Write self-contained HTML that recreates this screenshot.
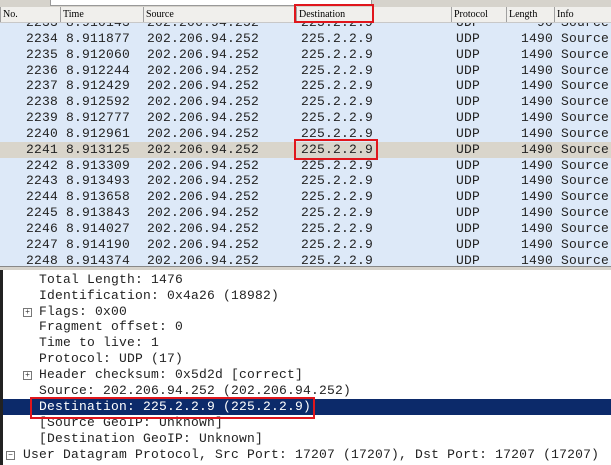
<!DOCTYPE html>
<html><head><meta charset="utf-8"><style>
body{margin:0;width:611px;height:465px;overflow:hidden;background:#fff;position:relative;font-family:"Liberation Mono",monospace}
.top{position:absolute;left:0;top:0;width:611px;height:7px;background:#d6d3cc}
.top .box{position:absolute;left:50px;top:0;width:320px;height:5px;background:#fff;border:1px solid #999;border-top:none}
.hdr{position:absolute;left:0;top:7px;width:611px;height:15px;background:#f0efec;border-bottom:1px solid #c8c8c8;font-family:"Liberation Serif",serif;font-size:10px;line-height:15px;z-index:3}
.hdr span{position:absolute;top:0;height:15px;border-left:1px solid #a0a0a0;padding-left:2px}
.list{position:absolute;left:0;top:22px;width:611px;height:244px;overflow:hidden;background:#dde9f8}
.row{position:absolute;left:0;width:611px;height:16px;font-size:13px;letter-spacing:0.2px;line-height:16px;color:#222}
.row span{position:absolute;top:0;white-space:pre}
.sel{background:#d9d5cb}
.div{position:absolute;left:0;top:266px;width:611px;height:4px;background:#d6d3cc;border-top:1px solid #888}
.det{position:absolute;left:0;top:270px;width:611px;height:195px;background:#fff;border-left:3px solid #222;box-sizing:border-box}
.ln{position:absolute;left:0;width:608px;height:16px;font-size:13px;letter-spacing:0.2px;line-height:16px;color:#222;white-space:pre}
.ln .t{position:absolute;left:36px}
.pm{position:absolute;left:20px;top:4px;width:7px;height:7px;border:1px solid #777;font-size:8px;line-height:7px;text-align:center;color:#333;letter-spacing:0}
.hl{background:#0c2a6a;color:#fff}
.red{position:absolute;border:2px solid #e0161c;z-index:5}
</style></head><body>
<div class="top"><div class="box"></div></div>
<div class="hdr">
<span style="left:0">No.</span>
<span style="left:60px">Time</span>
<span style="left:143px">Source</span>
<span style="left:296px">Destination</span>
<span style="left:451px">Protocol</span>
<span style="left:506px">Length</span>
<span style="left:554px">Info</span>
</div>
<div class="list">
<div class="row" style="top:-7px"><span style="left:26px">2233 8.910143</span><span style="left:147px">202.206.94.252</span><span style="left:301px">225.2.2.9</span><span style="left:456px">UDP</span><span style="left:521px">  90 Source</span></div>
<div class="row" style="top:9px"><span style="left:26px">2234 8.911877</span><span style="left:147px">202.206.94.252</span><span style="left:301px">225.2.2.9</span><span style="left:456px">UDP</span><span style="left:521px">1490 Source</span></div>
<div class="row" style="top:25px"><span style="left:26px">2235 8.912060</span><span style="left:147px">202.206.94.252</span><span style="left:301px">225.2.2.9</span><span style="left:456px">UDP</span><span style="left:521px">1490 Source</span></div>
<div class="row" style="top:41px"><span style="left:26px">2236 8.912244</span><span style="left:147px">202.206.94.252</span><span style="left:301px">225.2.2.9</span><span style="left:456px">UDP</span><span style="left:521px">1490 Source</span></div>
<div class="row" style="top:56px"><span style="left:26px">2237 8.912429</span><span style="left:147px">202.206.94.252</span><span style="left:301px">225.2.2.9</span><span style="left:456px">UDP</span><span style="left:521px">1490 Source</span></div>
<div class="row" style="top:72px"><span style="left:26px">2238 8.912592</span><span style="left:147px">202.206.94.252</span><span style="left:301px">225.2.2.9</span><span style="left:456px">UDP</span><span style="left:521px">1490 Source</span></div>
<div class="row" style="top:88px"><span style="left:26px">2239 8.912777</span><span style="left:147px">202.206.94.252</span><span style="left:301px">225.2.2.9</span><span style="left:456px">UDP</span><span style="left:521px">1490 Source</span></div>
<div class="row" style="top:104px"><span style="left:26px">2240 8.912961</span><span style="left:147px">202.206.94.252</span><span style="left:301px">225.2.2.9</span><span style="left:456px">UDP</span><span style="left:521px">1490 Source</span></div>
<div class="row sel" style="top:120px"><span style="left:26px">2241 8.913125</span><span style="left:147px">202.206.94.252</span><span style="left:301px">225.2.2.9</span><span style="left:456px">UDP</span><span style="left:521px">1490 Source</span></div>
<div class="row" style="top:136px"><span style="left:26px">2242 8.913309</span><span style="left:147px">202.206.94.252</span><span style="left:301px">225.2.2.9</span><span style="left:456px">UDP</span><span style="left:521px">1490 Source</span></div>
<div class="row" style="top:151px"><span style="left:26px">2243 8.913493</span><span style="left:147px">202.206.94.252</span><span style="left:301px">225.2.2.9</span><span style="left:456px">UDP</span><span style="left:521px">1490 Source</span></div>
<div class="row" style="top:167px"><span style="left:26px">2244 8.913658</span><span style="left:147px">202.206.94.252</span><span style="left:301px">225.2.2.9</span><span style="left:456px">UDP</span><span style="left:521px">1490 Source</span></div>
<div class="row" style="top:183px"><span style="left:26px">2245 8.913843</span><span style="left:147px">202.206.94.252</span><span style="left:301px">225.2.2.9</span><span style="left:456px">UDP</span><span style="left:521px">1490 Source</span></div>
<div class="row" style="top:199px"><span style="left:26px">2246 8.914027</span><span style="left:147px">202.206.94.252</span><span style="left:301px">225.2.2.9</span><span style="left:456px">UDP</span><span style="left:521px">1490 Source</span></div>
<div class="row" style="top:215px"><span style="left:26px">2247 8.914190</span><span style="left:147px">202.206.94.252</span><span style="left:301px">225.2.2.9</span><span style="left:456px">UDP</span><span style="left:521px">1490 Source</span></div>
<div class="row" style="top:231px"><span style="left:26px">2248 8.914374</span><span style="left:147px">202.206.94.252</span><span style="left:301px">225.2.2.9</span><span style="left:456px">UDP</span><span style="left:521px">1490 Source</span></div>
</div>
<div class="div"></div>
<div class="det">
<div class="ln" style="top:2px"><span class="t">Total Length: 1476</span></div>
<div class="ln" style="top:18px"><span class="t">Identification: 0x4a26 (18982)</span></div>
<div class="ln" style="top:34px"><span class="pm">+</span><span class="t">Flags: 0x00</span></div>
<div class="ln" style="top:49px"><span class="t">Fragment offset: 0</span></div>
<div class="ln" style="top:65px"><span class="t">Time to live: 1</span></div>
<div class="ln" style="top:81px"><span class="t">Protocol: UDP (17)</span></div>
<div class="ln" style="top:97px"><span class="pm">+</span><span class="t">Header checksum: 0x5d2d [correct]</span></div>
<div class="ln" style="top:113px"><span class="t">Source: 202.206.94.252 (202.206.94.252)</span></div>
<div class="ln hl" style="top:129px;height:16px"><span class="t">Destination: 225.2.2.9 (225.2.2.9)</span></div>
<div class="ln" style="top:145px"><span class="t">[Source GeoIP: Unknown]</span></div>
<div class="ln" style="top:161px"><span class="t">[Destination GeoIP: Unknown]</span></div>
<div class="ln" style="top:177px"><span class="pm" style="left:3px">−</span><span class="t" style="left:20px">User Datagram Protocol, Src Port: 17207 (17207), Dst Port: 17207 (17207)</span></div>
</div>
<div class="red" style="left:294px;top:4px;width:76px;height:15px"></div>
<div class="red" style="left:294px;top:139px;width:80px;height:17px"></div>
<div class="red" style="left:30px;top:397px;width:281px;height:18px"></div>
</body></html>
